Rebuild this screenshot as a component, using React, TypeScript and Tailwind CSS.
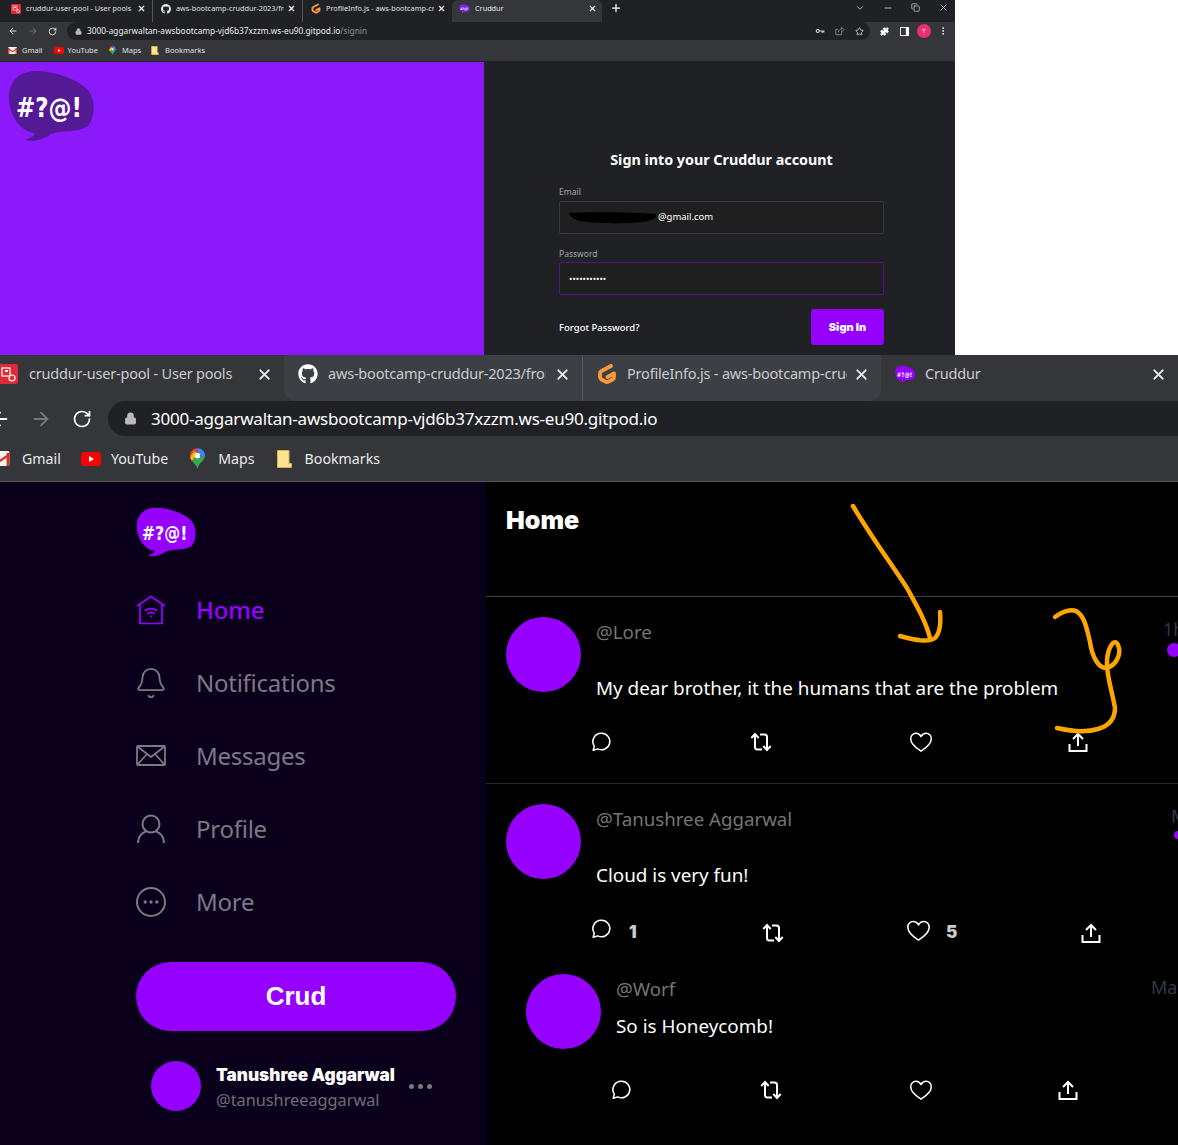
import { FaGithub } from "react-icons/fa";
import {
  ArrowLeft,
  ArrowRight,
  Bell,
  ChevronDown,
  Copy,
  Ellipsis,
  Lock,
  Minus,
  MoreVertical,
  Plus,
  Puzzle,
  RotateCw,
  Star,
  X,
} from "lucide-react";

const sans = "font-['Noto_Sans','Open_Sans',sans-serif]";

const Logo = ({ className, fill = "#9500ff" }: { className: string; fill?: string }) => (
  <svg viewBox="0 0 86 72" className={className}>
    <path
      d="M1 27C1 10 13 1 28 1C46 1 70 9 80 20C88 30 87 47 80 56C70 63 52 60 43 64C36 70 24 72 17 70C22 68 27 66 27 63C12 62 1 45 1 27Z"
      fill={fill}
    />
    <text
      x="8"
      y="47"
      fill="#fff"
      fontSize="27"
      fontWeight="700"
      fontFamily="DejaVu Sans, sans-serif"
      textLength={66}
      lengthAdjust="spacingAndGlyphs"
    >
      #?@!
    </text>
  </svg>
);

const AwsIcon = ({ className }: { className: string }) => (
  <svg viewBox="0 0 20 20" className={className}>
    <rect width="20" height="20" rx="2" fill="#dd2c35" />
    <rect x="4" y="4" width="8" height="8" fill="none" stroke="#fff" strokeWidth="1.2" />
    <rect x="7" y="6" width="3" height="2" fill="#fff" />
    <circle cx="14" cy="14" r="3" fill="none" stroke="#fff" strokeWidth="1.2" />
  </svg>
);

const GitpodIcon = ({ className }: { className: string }) => (
  <svg viewBox="0 0 20 22" className={className} fill="none">
    <path
      d="M14 3 4.500 8c-.9.5-1.500 1.300-1.500 2.500v3.500c0 1.200.6 2 1.500 2.500l4 2.200c1 .6 2 .6 3 0l4-2.200c1-.5 1.500-1.300 1.500-2.500V10.500L10.500 14"
      stroke="#ff9a3c"
      strokeWidth="3.800"
      strokeLinecap="round"
      strokeLinejoin="round"
    />
  </svg>
);

const GmailIcon = ({ className }: { className: string }) => (
  <svg viewBox="0 0 20 16" className={className}>
    <rect width="20" height="16" rx="1.5" fill="#f2f2f2" />
    <path d="M0 2 10 9 20 2V5L10 12 0 5Z" fill="#d93025" />
    <path d="M0 2h3v14H1.5A1.5 1.5 0 0 1 0 14.500ZM17 2h3v12.500a1.500 1.500 0 0 1-1.500 1.500H17Z" fill="#d93025" />
  </svg>
);

const YoutubeIcon = ({ className }: { className: string }) => (
  <svg viewBox="0 0 20 14" className={className}>
    <rect width="20" height="14" rx="3.500" fill="#f00" />
    <path d="M8 4 13 7 8 10Z" fill="#fff" />
  </svg>
);

const MapsIcon = ({ className }: { className: string }) => (
  <svg viewBox="0 0 16 22" className={className}>
    <path d="M8 0C3.500 0 0 3.500 0 8c0 2.200.8 3.800 2 5.400L8 6Z" fill="#ea4335" />
    <path d="M8 0c4.500 0 8 3.500 8 8 0 .8-.1 1.500-.4 2.200L8 6Z" fill="#4285f4" />
    <path d="M2 13.400 8 6l7.600 4.200C14 14 9.500 16 8 22c-1-3.500-3.800-6-6-8.600Z" fill="#34a853" />
    <path d="M2 13.400 8 6l-3-2.500C3 5 1 7 .4 10.500Z" fill="#fbbc04" />
    <circle cx="8" cy="8" r="2.800" fill="#fff" />
  </svg>
);

const FolderIcon = ({ className }: { className: string }) => (
  <svg viewBox="0 0 15 18" className={className}>
    <path d="M.5.5h11.500V13.500H14.500V17.500H.5Z" fill="#fde293" stroke="#d9b44a" />
  </svg>
);

const ReplyIcon = ({ className }: { className: string }) => (
  <svg viewBox="0 0 24 24" className={className} fill="none" stroke="#fff" strokeWidth="1.700" strokeLinejoin="round">
    <path d="M12.500 2.500a9 9 0 1 1-4 17l-5 1.500 1.200-4.500A9 9 0 0 1 12.500 2.500Z" />
  </svg>
);

const RetweetIcon = ({ className }: { className: string }) => (
  <svg viewBox="0 0 24 24" className={className} fill="none" stroke="#fff" strokeWidth="2">
    <path d="M6 4v13c0 1.500 1 2.500 2.500 2.500H13M2.300 8 6 4l3.700 4" />
    <path d="M11 4.500h4.500c1.500 0 2.500 1 2.500 2.500v13M14.300 16l3.700 4 3.700-4" />
  </svg>
);

const HeartIcon = ({ className }: { className: string }) => (
  <svg viewBox="0 0 24 24" className={className} fill="none" stroke="#fff" strokeWidth="1.400" strokeLinejoin="round">
    <path d="M12 20.500C5 16 2.500 12.500 2.500 9 2.500 6 4.800 4 7.300 4 9.200 4 11 5 12 7 13 5 14.800 4 16.700 4 19.200 4 21.500 6 21.500 9 21.500 12.500 19 16 12 20.500Z" />
  </svg>
);

const ShareIcon = ({ className }: { className: string }) => (
  <svg viewBox="0 0 24 24" className={className} fill="none" stroke="#fff" strokeWidth="2">
    <path d="M12 16V4M7 9l5-5 5 5M3.500 14v7h17v-7" />
  </svg>
);

const HomeIcon = () => (
  <svg viewBox="0 0 30 30" className="h-[30px] w-[30px]" fill="none" stroke="#9500ff" strokeWidth="1.700">
    <path d="M1 11 15 1.500 29 11M4 9v19.500h22V9" strokeLinejoin="round" />
    <path d="M9.500 15.500c3-2.500 8-2.500 11 0M12 18.500c1.800-1.300 4.200-1.300 6 0" strokeLinecap="round" />
    <circle cx="15" cy="21.500" r="1" fill="#9500ff" stroke="none" />
  </svg>
);

const navItems = [
  { label: "Notifications", icon: <Bell className="h-[34px] w-[34px] shrink-0" strokeWidth={1.300} /> },
  {
    label: "Messages",
    icon: (
      <svg viewBox="0 0 30 21" className="h-[21px] w-[30px] shrink-0" fill="none" stroke="currentColor" strokeWidth="1.800">
        <rect x="1" y="1" width="28" height="19" rx="1" />
        <path d="M1.500 1.500 15 12 28.500 1.500M1.500 19.500 11 9M28.500 19.500 19 9" />
      </svg>
    ),
  },
  {
    label: "Profile",
    icon: (
      <svg viewBox="0 0 30 30" className="h-[30px] w-[30px] shrink-0" fill="none" stroke="currentColor" strokeWidth="2">
        <circle cx="15" cy="10" r="8.500" />
        <path d="M2 29C2 22.500 6 18.500 10 17.500M28 29C28 22.500 24 18.500 20 17.500" />
      </svg>
    ),
  },
  {
    label: "More",
    icon: (
      <span className="flex h-[30px] w-[30px] items-center justify-center rounded-full border-2 border-[#7d7885]">
        <Ellipsis className="h-5 w-5" strokeWidth={2} />
      </span>
    ),
  },
];

const MiniTab = ({ icon, title, className, textWidth }: { icon: React.ReactNode; title: string; className: string; textWidth: string }) => (
  <div className={`flex h-full shrink-0 items-center border-r border-[#55565a] pb-[5px] ${className}`}>
    {icon}
    <span className={`ml-[5px] overflow-hidden whitespace-nowrap text-[7.300px] text-[#dfe1e5] ${textWidth}`}>{title}</span>
    <X className="ml-auto mr-[6px] h-[9px] w-[9px] shrink-0 text-white" strokeWidth={3} />
  </div>
);

const BigTab = ({ icon, title, width, textWidth, className }: { icon: React.ReactNode; title: string; width: string; textWidth: string; className: string }) => (
  <div className={`flex h-full shrink-0 items-center pb-2 ${width} ${className}`}>
    {icon}
    <span className={`overflow-hidden whitespace-nowrap text-[14.500px] tracking-[-0.2px] text-[#c9cbd0] ${textWidth}`}>{title}</span>
    <X className="ml-auto mr-[11px] h-[17px] w-[17px] shrink-0 text-[#e3e4e6]" strokeWidth={2.500} />
  </div>
);

const TopBrowser = () => (
  <div className="flex h-[62px] flex-col bg-[#35363a]">
    <div className="flex h-[22px] items-stretch bg-[#202124]">
      <MiniTab className="w-[153px] pl-[11px]" textWidth="w-[106px]" title="cruddur-user-pool - User pools" icon={<AwsIcon className="h-[10px] w-[10px] shrink-0" />} />
      <MiniTab className="w-[150px] pl-[8px]" textWidth="w-[108px]" title="aws-bootcamp-cruddur-2023/frontend" icon={<FaGithub className="h-[10px] w-[10px] shrink-0 text-white" />} />
      <div className="flex w-[149px] shrink-0 items-center pb-[5px] pl-[8px]">
        <GitpodIcon className="h-[11px] w-[10px] shrink-0" />
        <span className="ml-[5px] w-[108px] overflow-hidden whitespace-nowrap text-[7.300px] text-[#dfe1e5]">ProfileInfo.js - aws-bootcamp-cruddur</span>
        <X className="ml-[3px] h-[9px] w-[9px] shrink-0 text-white" strokeWidth={3} />
      </div>
      <div className="flex w-[150px] shrink-0 items-center rounded-t-md bg-[#35363a] pb-[5px] pl-[7px]">
        <Logo className="h-[9px] w-[11px] shrink-0" fill="#7d22e0" />
        <span className="ml-[5px] text-[7.300px] text-[#e8eaed]">Cruddur</span>
        <X className="ml-auto mr-[5px] h-[9px] w-[9px] shrink-0 text-white" strokeWidth={3} />
      </div>
      <Plus className="ml-[8px] mt-[2px] h-[12px] w-[12px] text-white" strokeWidth={2.500} />
      <div className="ml-auto flex items-center gap-[18px] pb-[7px] pr-[6px] text-[#c8c9cb]">
        <ChevronDown className="h-[10px] w-[10px]" />
        <Minus className="h-[10px] w-[10px]" />
        <Copy className="h-[9px] w-[9px]" />
        <X className="h-[11px] w-[11px]" strokeWidth={1.500} />
      </div>
    </div>
    <div className="flex h-[18px] items-center">
      <ArrowLeft className="ml-[8px] h-[10px] w-[10px] text-white" />
      <ArrowRight className="ml-[10px] h-[10px] w-[10px] text-[#77787b]" />
      <RotateCw className="ml-[10px] h-[9px] w-[9px] text-white" />
      <div className="ml-[10px] flex h-[18px] w-[803px] items-center rounded-full bg-[#202124] pl-[8px]">
        <Lock className="h-[7px] w-[7px] text-[#b9babc]" fill="#b9babc" />
        <span className="ml-[5px] text-[8.300px] text-[#e8eaed]">
          3000-aggarwaltan-awsbootcamp-vjd6b37xzzm.ws-eu90.gitpod.io<span className="text-[#8f9196]">/signin</span>
        </span>
        <svg viewBox="0 0 12 8" className="ml-auto h-[6px] w-[10px]" fill="none" stroke="#d5d6d8" strokeWidth="1.500">
          <circle cx="3" cy="4" r="2" />
          <path d="M5 4h7M9 4v2.500M11 4v2" />
        </svg>
        <svg viewBox="0 0 12 12" className="ml-[10px] h-[10px] w-[10px]" fill="none" stroke="#8f9196">
          <path d="M8 7v3.500H1V4h2.500M4 7.500C4.500 5 6 3.800 8 3.800V1.500L11 4.500 8 7V5.500" />
        </svg>
        <Star className="ml-[10px] mr-[6px] h-[9px] w-[9px] text-[#e8eaed]" />
      </div>
      <Puzzle className="ml-[10px] h-[9px] w-[9px] text-white" fill="#fff" />
      <svg viewBox="0 0 10 10" className="ml-[11px] h-[9px] w-[9px]">
        <rect width="10" height="10" fill="#fff" />
        <rect x="1" y="1" width="5.500" height="8" fill="#35363a" />
      </svg>
      <span className="ml-[8px] flex h-[14px] w-[14px] items-center justify-center rounded-full bg-[#ee2d75] text-[6px] text-white">T</span>
      <MoreVertical className="ml-[7px] h-[10px] w-[10px] text-white" />
    </div>
    <div className="flex h-[22px] items-center border-b border-[#202124] pl-[8px] text-[7.500px] text-[#dfe1e5]">
      <GmailIcon className="h-[7px] w-[9px]" />
      <span className="ml-[5px]">Gmail</span>
      <YoutubeIcon className="ml-[11px] h-[7px] w-[10px]" />
      <span className="ml-[4px]">YouTube</span>
      <MapsIcon className="ml-[11px] h-[9px] w-[7px]" />
      <span className="ml-[6px]">Maps</span>
      <FolderIcon className="ml-[10px] h-[9px] w-[8px]" />
      <span className="ml-[6px]">Bookmarks</span>
    </div>
  </div>
);

const SignIn = () => (
  <div className="flex h-[293px]">
    <div className="w-[484px] bg-[#8b19f9] pl-[8px] pt-[8px]">
      <Logo className="h-[72px] w-[86px]" fill="#541a96" />
    </div>
    <div className={`w-[471px] bg-[#202125] pl-[75px] pt-[88px] ${sans}`}>
      <div className="w-[325px] text-center text-[14.300px] leading-5 font-bold text-white">Sign into your Cruddur account</div>
      <div className="mt-[16px] text-[8.500px] leading-3 text-[#a5a5a8]">Email</div>
      <div className="mt-[3px] flex h-[33px] w-[325px] items-center rounded-[2px] border border-[#3a3a3d] bg-[#1f1f1f] pl-[8px] text-[9.500px] text-white">
        <svg viewBox="0 0 90 12" className="h-[12px] w-[90px]">
          <path d="M1 1C20 0 60 0 88 2 90 5 86 9 74 10 60 12 30 12 12 9 6 7 2 5 1 1Z" fill="#000" />
        </svg>
        <span>@gmail.com</span>
      </div>
      <div className="mt-[14px] text-[8.500px] leading-3 text-[#a5a5a8]">Password</div>
      <div className="mt-[2px] flex h-[33px] w-[325px] items-center rounded-[2px] border border-[#52138f] bg-[#1f1f1f] pl-[9px] text-[9px] text-white">
        •••••••••••
      </div>
      <div className="mt-[14px] flex h-[36px] w-[325px] items-center justify-between">
        <span className="pt-[2px] text-[9.500px] font-medium text-white">Forgot Password?</span>
        <span className="flex h-[36px] w-[73px] items-center justify-center rounded-[3px] bg-[#9500ff] font-['Inter',sans-serif] text-[11px] font-black text-white">
          Sign In
        </span>
      </div>
    </div>
  </div>
);

const BottomBrowser = () => (
  <div className={`flex h-[127px] flex-col border-b border-[#55565a] bg-[#35363a] ${sans}`}>
    <div className="flex h-[46px] items-stretch">
      <BigTab className="pl-0" width="w-[284px]" textWidth="ml-[11px] w-[215px]" title="cruddur-user-pool - User pools" icon={<AwsIcon className="-ml-[2px] h-[20px] w-[20px] shrink-0" />} />
      <BigTab className="rounded-bl-xl border-r border-[#5a5c60] bg-[#3c3f43] pl-[14px]" width="w-[299px]" textWidth="ml-[10px] w-[218px]" title="aws-bootcamp-cruddur-2023/frontend" icon={<FaGithub className="h-[20px] w-[20px] shrink-0 text-white" />} />
      <BigTab className="rounded-br-xl bg-[#3c3f43] pl-[14px]" width="w-[298px]" textWidth="ml-[10px] w-[220px]" title="ProfileInfo.js - aws-bootcamp-cruddur" icon={<GitpodIcon className="h-[22px] w-[20px] shrink-0" />} />
      <BigTab className="pl-[14px]" width="w-[297px]" textWidth="ml-[10px] w-[70px]" title="Cruddur" icon={<Logo className="h-[18px] w-[20px] shrink-0" />} />
    </div>
    <div className="flex h-[35px] items-center">
      <ArrowLeft className="-ml-[11px] h-[22px] w-[22px] shrink-0 text-white" />
      <ArrowRight className="ml-[19px] h-[22px] w-[22px] shrink-0 text-[#77787b]" />
      <RotateCw className="ml-[20px] h-[20px] w-[20px] shrink-0 text-white" />
      <div className="ml-[16px] flex h-[35px] w-[1100px] shrink-0 items-center rounded-l-full bg-[#202124] pl-[16px]">
        <Lock className="h-[13px] w-[13px] text-[#b9babc]" fill="#b9babc" />
        <span className="ml-[14px] text-[17px] tracking-[-0.22px] text-white">3000-aggarwaltan-awsbootcamp-vjd6b37xzzm.ws-eu90.gitpod.io</span>
      </div>
    </div>
    <div className="flex h-[45px] items-center text-[14.200px] text-[#e8eaed]">
      <GmailIcon className="-ml-[10px] h-[15px] w-[20px]" />
      <span className="ml-[12px]">Gmail</span>
      <YoutubeIcon className="ml-[20px] h-[14px] w-[20px]" />
      <span className="ml-[10px]">YouTube</span>
      <MapsIcon className="ml-[22px] h-[21px] w-[15px]" />
      <span className="ml-[13px]">Maps</span>
      <FolderIcon className="ml-[22px] h-[18px] w-[15px]" />
      <span className="ml-[13px]">Bookmarks</span>
    </div>
  </div>
);

const Sidebar = () => (
  <div className={`flex w-[486px] shrink-0 flex-col bg-[#0b001c] pl-[136px] pt-[25px] ${sans}`}>
    <Logo className="h-[50px] w-[60px]" />
    <div className="mt-[16px] flex h-[73px] items-center">
      <span className="flex w-[30px] justify-center"><HomeIcon /></span>
      <span className="ml-[30px] text-[24px] font-medium tracking-[-0.2px] text-[#9500ff]">Home</span>
    </div>
    {navItems.map((item) => (
      <div key={item.label} className="flex h-[73px] items-center text-[#7d7885]">
        <span className="flex w-[30px] justify-center">{item.icon}</span>
        <span className="ml-[30px] text-[24px] tracking-[-0.25px]">{item.label}</span>
      </div>
    ))}
    <div className="mt-[24px] flex h-[69px] w-[320px] items-center justify-center rounded-full bg-[#9500ff] font-['Liberation_Sans',sans-serif] text-[26px] font-bold text-white">
      Crud
    </div>
    <div className="ml-[15px] mt-[29px] flex items-center">
      <span className="h-[50px] w-[50px] rounded-full bg-[#9500ff]" />
      <div className="ml-[15px] w-[178px] pt-[3px]">
        <div className="whitespace-nowrap font-['Inter',sans-serif] text-[17.200px] leading-6 font-black text-white">Tanushree Aggarwal</div>
        <div className="mt-[1px] text-[16.300px] leading-6 text-[#706d77]">@tanushreeaggarwal</div>
      </div>
      <span className="ml-[15px] flex gap-[4px]">
        <span className="h-[5px] w-[5px] rounded-full bg-[#7d7885]" />
        <span className="h-[5px] w-[5px] rounded-full bg-[#7d7885]" />
        <span className="h-[5px] w-[5px] rounded-full bg-[#7d7885]" />
      </span>
    </div>
  </div>
);

const Count = ({ value }: { value: string }) => (
  <span className="font-['Inter',sans-serif] text-[17px] font-black text-[#cccccc]">{value}</span>
);

const Feed = () => (
  <div className={`w-[700px] shrink-0 bg-black ${sans}`}>
    <div className="h-[115px] border-b border-[#3f3f46] pl-5 pt-[20px] font-['Inter',sans-serif] text-[25px] leading-9 font-black text-white">
      Home
    </div>

    <div className="flex h-[187px] border-b border-[#26262b] pl-5 pt-5">
      <span className="h-[75px] w-[75px] shrink-0 rounded-full bg-[#9500ff]" />
      <div className="ml-[15px]">
        <div className="flex">
          <span className="w-[567px] text-[18.700px] leading-[30px] text-[#757575]">@Lore</span>
          <div className="text-[18px] leading-[24px] text-[#33384a]">
            1h
            <span className="mt-[2px] ml-[4px] block h-[14px] w-[14px] rounded-full bg-[#9500ff]" />
          </div>
        </div>
        <div className="mt-[15px] text-[18.850px] leading-[32px] text-white">My dear brother, it the humans that are the problem</div>
        <div className="-ml-[6px] mt-[25px] flex items-center">
          <span className="w-[159px]"><ReplyIcon className="h-[22px] w-[22px]" /></span>
          <span className="w-[159px]"><RetweetIcon className="h-[24px] w-[24px]" /></span>
          <span className="w-[158px]"><HeartIcon className="h-[26px] w-[26px]" /></span>
          <ShareIcon className="h-[24px] w-[24px]" />
        </div>
      </div>
    </div>

    <div className="flex pl-5 pt-5">
      <span className="h-[75px] w-[75px] shrink-0 rounded-full bg-[#9500ff]" />
      <div className="ml-[15px]">
        <div className="flex">
          <span className="w-[575px] text-[18.700px] leading-[30px] text-[#757575]">@Tanushree Aggarwal</span>
          <div className="text-[18px] leading-[24px] text-[#33384a]">
            M
            <span className="mt-[3px] ml-[3px] block h-[8px] w-[8px] rounded-full bg-[#9500ff]" />
          </div>
        </div>
        <div className="mt-[20px] text-[18.850px] leading-[32px] text-white">Cloud is very fun!</div>
        <div className="-ml-[6px] mt-[27px] flex h-[30px] items-center">
          <span className="flex w-[171px] items-center gap-[17px]"><ReplyIcon className="-mt-[8px] h-[22px] w-[22px]" /><Count value="1" /></span>
          <span className="w-[144px]"><RetweetIcon className="h-[24px] w-[24px]" /></span>
          <span className="flex w-[174px] items-center gap-[14px]"><HeartIcon className="-mt-[6px] h-[27px] w-[27px]" /><Count value="5" /></span>
          <ShareIcon className="h-[24px] w-[24px]" />
        </div>
      </div>
    </div>

    <div className="flex pl-10 pt-[26px]">
      <span className="h-[75px] w-[75px] shrink-0 rounded-full bg-[#9500ff]" />
      <div className="ml-[15px]">
        <div className="flex">
          <span className="w-[535px] text-[18.700px] leading-[30px] text-[#757575]">@Worf</span>
          <span className="text-[18px] leading-[26px] text-[#33384a]">Mar</span>
        </div>
        <div className="mt-[6px] text-[18.850px] leading-[32px] text-white">So is Honeycomb!</div>
        <div className="-ml-[6px] mt-[35px] flex items-center">
          <span className="w-[149px]"><ReplyIcon className="h-[22px] w-[22px]" /></span>
          <span className="w-[149px]"><RetweetIcon className="h-[24px] w-[24px]" /></span>
          <span className="w-[148px]"><HeartIcon className="h-[26px] w-[26px]" /></span>
          <ShareIcon className="h-[24px] w-[24px]" />
        </div>
      </div>
    </div>
  </div>
);

// hand-drawn marks sitting over the feed
const Scribbles = () => (
  <svg viewBox="0 0 1178 1145" className="pointer-events-none absolute inset-0 h-[1145px] w-[1178px]" fill="none" stroke="#ffa500" strokeWidth="4.500" strokeLinecap="round" strokeLinejoin="round">
    <path d="M853 506C870 535 890 562 907 588C918 608 926 622 930 638" />
    <path d="M940 612C941 624 940 633 935 638C928 643 915 640 900 636" />
    <path d="M1055 617C1062 612 1070 609 1076 611C1085 616 1087 630 1090 642C1092 656 1098 668 1106 668C1116 666 1122 654 1118 645C1114 637 1108 648 1107 660C1106 675 1112 690 1115 708C1115 720 1108 726 1098 729C1085 733 1070 731 1057 728" />
  </svg>
);

const App = () => (
  <div className="relative h-[1145px] w-[1178px] overflow-hidden bg-white">
    <div className={`h-[355px] w-[955px] overflow-hidden ${sans}`}>
      <TopBrowser />
      <SignIn />
    </div>
    <BottomBrowser />
    <div className="flex h-[663px] overflow-hidden">
      <Sidebar />
      <Feed />
    </div>
    <Scribbles />
  </div>
);

export default App;
